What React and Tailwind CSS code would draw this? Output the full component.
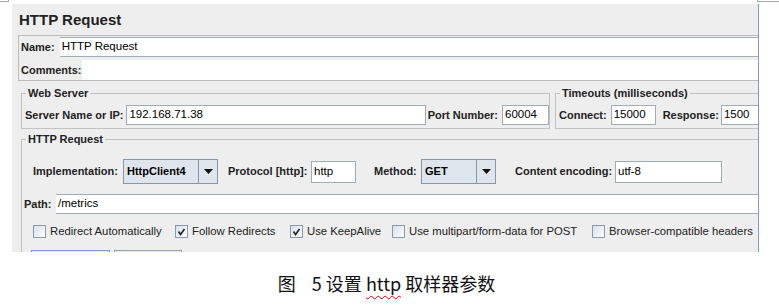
import React from 'react';

const Label = ({ children, className = '' }) => (
  <span className={`font-bold text-[11px] text-[#222] whitespace-nowrap shrink-0 ${className}`}>{children}</span>
);

const Field = ({ value, className = '' }) => (
  <div className={`h-[20px] bg-white border border-[#a2acb7] flex items-center px-[2px] text-[11.5px] text-black whitespace-nowrap overflow-hidden shrink-0 ${className}`}>
    {value}
  </div>
);

const Combo = ({ value, className = '' }) => (
  <div className={`h-[25px] flex shrink-0 border border-[#8797a6] bg-[#dfe5ec] ${className}`}>
    <div className="flex-1 flex items-center pl-[3px] font-bold text-[11px] text-black">{value}</div>
    <div className="w-[19px] border-l border-[#8797a6] flex items-center justify-center">
      <svg width="9" height="5" viewBox="0 0 9 5">
        <path d="M0 0 L9 0 L4.5 5 Z" fill="#111" />
      </svg>
    </div>
  </div>
);

const Check = ({ checked, label, className = '' }) => (
  <div className={`flex items-center gap-[4px] shrink-0 ${className}`}>
    <div className="w-[13px] h-[13px] border border-[#8a9bb0] bg-linear-to-br from-[#d6e0eb] to-[#ffffff] flex items-center justify-center">
      {checked && (
        <svg width="9" height="9" viewBox="0 0 9 9">
          <path d="M1.5 4.5 L3.5 7.5 L7.5 2" stroke="#222" strokeWidth="1.6" fill="none" />
        </svg>
      )}
    </div>
    <span className="text-[11.3px] text-[#222] whitespace-nowrap">{label}</span>
  </div>
);

const Group = ({ title, className = '', children }) => (
  <fieldset className={`border border-[#c2c2c2] shrink-0 ${className}`}>
    <legend className="ml-[4px] px-[2px] font-bold text-[11px] leading-[14px] text-[#222]">{title}</legend>
    {children}
  </fieldset>
);

export default function App() {
  return (
    <div
      className="w-[779px] h-[306px] bg-white flex flex-col overflow-hidden"
      style={{ fontFamily: '"Liberation Sans", Arial, sans-serif' }}
    >
      <div className="h-[4px] shrink-0 flex justify-between">
        <div className="w-[9px] h-[2px] border-b border-r border-[#a9a9a9]" />
        <div className="w-[22px] h-[2px] border-b border-l border-[#a9a9a9]" />
      </div>

      <div className="ml-[12px] w-[747px] h-[248px] shrink-0 bg-[#eeeeee] border-r border-[#7b9bd6] overflow-hidden flex flex-col">
        <div className="h-[31px] shrink-0 pl-[7px] pt-[6px] text-[15px] font-bold leading-[20px] text-[#222]">HTTP Request</div>

        {/* name / comments */}
        <div className="ml-[6px] w-[760px] shrink-0 border border-[#bdbdbd] flex flex-col pt-[1px] gap-[3px]">
          <div className="flex items-center pl-[2px] gap-[5px]">
            <Label>Name:</Label>
            <Field value="HTTP Request" className="flex-1 border-x-0" />
          </div>
          <div className="flex items-center pl-[2px] h-[20px]">
            <Label>Comments:</Label>
            <div className="flex-1 h-[20px] bg-white" />
          </div>
        </div>

        {/* web server + timeouts */}
        <div className="mt-[5px] ml-[9px] shrink-0 flex gap-[5px]">
          <Group title="Web Server" className="w-[529px]">
            <div className="flex items-center pl-[3px] pt-[5px] pb-[3px]">
              <Label>Server Name or IP:</Label>
              <Field value="192.168.71.38" className="flex-1 ml-[3px]" />
              <Label className="ml-[2px]">Port Number:</Label>
              <Field value="60004" className="w-[47px] ml-[4px]" />
            </div>
          </Group>
          <Group title="Timeouts (milliseconds)" className="w-[300px]">
            <div className="flex items-center pl-[3px] pt-[5px] pb-[3px]">
              <Label>Connect:</Label>
              <Field value="15000" className="w-[45px] ml-[4px]" />
              <Label className="ml-[7px]">Response:</Label>
              <Field value="1500" className="w-[60px] ml-[2px]" />
            </div>
          </Group>
        </div>

        {/* http request */}
        <Group title="HTTP Request" className="mt-[3px] ml-[9px] w-[760px] h-[140px]">
          <div className="flex items-center h-[25px] mt-[13px] pl-[11px]">
            <Label className="w-[90px]">Implementation:</Label>
            <Combo value="HttpClient4" className="w-[95px]" />
            <Label className="w-[83px] ml-[10px]">Protocol [http]:</Label>
            <Field value="http" className="w-[45px] h-[22px]" />
            <Label className="w-[47px] ml-[18px]">Method:</Label>
            <Combo value="GET" className="w-[75px]" />
            <Label className="w-[100px] ml-[19px]">Content encoding:</Label>
            <Field value="utf-8" className="w-[107px] h-[22px]" />
          </div>

          <div className="flex items-center mt-[10px] pl-[2px]">
            <Label className="w-[32px]">Path:</Label>
            <Field value="/metrics" className="flex-1 border-x-0" />
          </div>

          <div className="flex items-center h-[18px] mt-[8px] pl-[11px]">
            <Check label="Redirect Automatically" className="w-[142px]" />
            <Check checked label="Follow Redirects" className="w-[115px]" />
            <Check checked label="Use KeepAlive" className="w-[102px]" />
            <Check label="Use multipart/form-data for POST" className="w-[200px]" />
            <Check label="Browser-compatible headers" />
          </div>

          <div className="flex gap-[4px] mt-[10px] pl-[9px]">
            <div className="w-[79px] h-[20px] border border-[#7a9cc8] bg-[#e4ebf3]" />
            <div className="w-[68px] h-[20px] border border-[#9aa3ad] bg-[#e8ebee]" />
          </div>
        </Group>
      </div>

      <div className="flex justify-center mt-[19px] pr-[6px]">
        <span
          className="flex items-center text-[18px] leading-[24px] text-[#111] whitespace-pre"
          style={{ fontFamily: '"Noto Sans CJK SC", "Liberation Sans", sans-serif' }}
        >
          <span className="mr-[16px]">图</span>
          {'5 设置 '}
          <span className="underline decoration-wavy decoration-red-600 decoration-1 underline-offset-4">http</span>
          {' 取样器参数'}
        </span>
      </div>
    </div>
  );
}
